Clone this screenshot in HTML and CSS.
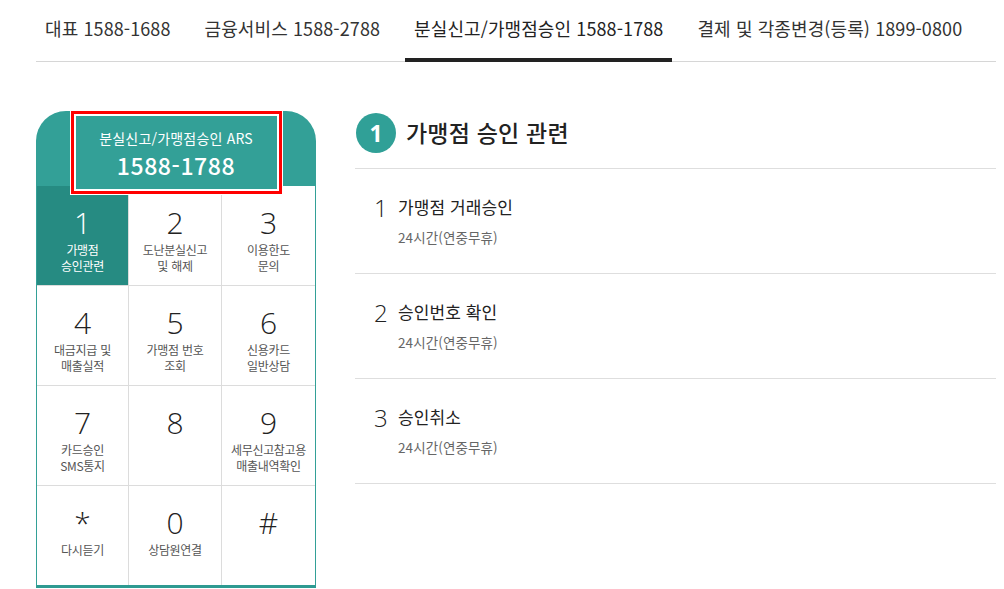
FILE: index.html
```html
<!DOCTYPE html>
<html lang="ko">
<head>
<meta charset="utf-8">
<title>ARS</title>
<link rel="stylesheet" href="styles.css">
</head>
<body>
<div class="wrap">
  <ul class="tabs">
    <li class="tab">대표 1588-1688</li>
    <li class="tab">금융서비스 1588-2788</li>
    <li class="tab active">분실신고/가맹점승인 1588-1788</li>
    <li class="tab">결제 및 각종변경(등록) 1899-0800</li>
  </ul>

  <div class="main">
    <div class="phone">
      <div class="phone-head">
        <div class="ars-box">
          <p class="ars-label">분실신고/가맹점승인 ARS</p>
          <p class="ars-num">1588-1788</p>
        </div>
      </div>
      <div class="keypad">
        <div class="key active"><span class="k-num">1</span><span class="k-txt">가맹점<br>승인관련</span></div>
        <div class="key"><span class="k-num">2</span><span class="k-txt">도난분실신고<br>및 해제</span></div>
        <div class="key"><span class="k-num">3</span><span class="k-txt">이용한도<br>문의</span></div>
        <div class="key"><span class="k-num">4</span><span class="k-txt">대금지급 및<br>매출실적</span></div>
        <div class="key"><span class="k-num">5</span><span class="k-txt">가맹점 번호<br>조회</span></div>
        <div class="key"><span class="k-num">6</span><span class="k-txt">신용카드<br>일반상담</span></div>
        <div class="key"><span class="k-num">7</span><span class="k-txt">카드승인<br>SMS통지</span></div>
        <div class="key"><span class="k-num">8</span><span class="k-txt"></span></div>
        <div class="key"><span class="k-num">9</span><span class="k-txt">세무신고참고용<br>매출내역확인</span></div>
        <div class="key last"><span class="k-num star">*</span><span class="k-txt">다시듣기</span></div>
        <div class="key last"><span class="k-num">0</span><span class="k-txt">상담원연결</span></div>
        <div class="key last"><span class="k-num">#</span><span class="k-txt"></span></div>
      </div>
    </div>

    <div class="detail">
      <div class="detail-head">
        <span class="circle">1</span>
        <h2 class="detail-title">가맹점 승인 관련</h2>
      </div>
      <ul class="items">
        <li class="item">
          <span class="i-num">1</span>
          <div class="i-body">
            <p class="i-title">가맹점 거래승인</p>
            <p class="i-sub">24시간(연중무휴)</p>
          </div>
        </li>
        <li class="item">
          <span class="i-num">2</span>
          <div class="i-body">
            <p class="i-title">승인번호 확인</p>
            <p class="i-sub">24시간(연중무휴)</p>
          </div>
        </li>
        <li class="item">
          <span class="i-num">3</span>
          <div class="i-body">
            <p class="i-title">승인취소</p>
            <p class="i-sub">24시간(연중무휴)</p>
          </div>
        </li>
      </ul>
    </div>
  </div>
</div>
</body>
</html>
```

FILE: styles.css
```css
* { box-sizing: border-box; }
html, body { margin: 0; padding: 0; background: #fff; }
body {
  font-family: "Noto Sans CJK KR", "Noto Sans", sans-serif;
  color: #222;
}
p, h2, ul { margin: 0; padding: 0; }
ul { list-style: none; }

.wrap {
  width: 960px;
  margin-left: 36px;
}

/* tabs */
.tabs {
  display: flex;
  gap: 16px;
  height: 62px;
  border-bottom: 1px solid #d6d6d6;
}
.tab {
  padding: 0 9px 3px;
  height: 62px;
  line-height: 56px;
  font-size: 18px;
  color: #333;
  letter-spacing: 0.1px;
  border-bottom: 4px solid transparent;
  white-space: nowrap;
}
.tab.active {
  color: #222;
  border-bottom-color: #222;
}

/* main */
.main {
  display: flex;
  gap: 39px;
  margin-top: 49px;
}

.phone {
  width: 280px;
  flex: none;
}
.phone-head {
  height: 75px;
  background: #33a097;
  border-radius: 30px 30px 0 0;
  display: flex;
  justify-content: center;
  align-items: flex-start;
}
.ars-box {
  position: relative;
  z-index: 2;
  width: 211px;
  height: 83px;
  margin-bottom: -8px;
  border: 3px solid #ff0000;
  box-shadow: 0 0 0 1px #fff, inset 0 0 0 2px #fff;
  background: #33a097;
  color: #fff;
  text-align: center;
  padding-top: 14px;
}
.ars-label {
  font-size: 14px;
  line-height: 20px;
  letter-spacing: 0.2px;
}
.ars-num {
  font-size: 23px;
  font-weight: 500;
  line-height: 30px;
  margin-top: 2px;
  letter-spacing: 0.6px;
}

.keypad {
  display: grid;
  grid-template-columns: 92px 93px 93px;
  border-left: 1px solid #33a097;
  border-right: 1px solid #33a097;
  border-bottom: 3px solid #2e9a91;
}
.key {
  height: 100px;
  border-right: 1px solid #dcdcdc;
  border-bottom: 1px solid #dcdcdc;
  display: flex;
  flex-direction: column;
  align-items: center;
  padding-top: 18px;
  background: #fff;
}
.key:nth-child(3n) { border-right: none; }
.key.last { height: 99px; border-bottom: none; }
.key.active {
  background: #268b82;
}
.k-num {
  font-family: "Open Sans", "Noto Sans", sans-serif;
  font-weight: 300;
  font-size: 30px;
  line-height: 38px;
  color: #222;
}
.k-txt {
  font-size: 12px;
  line-height: 16px;
  color: #555;
  text-align: center;
  letter-spacing: -0.3px;
}
.key.active .k-num,
.key.active .k-txt { color: #fff; }

/* detail */
.detail {
  flex: 1;
}
.detail-head {
  display: flex;
  align-items: center;
  gap: 10px;
  height: 58px;
  padding-bottom: 15px;
  padding-left: 1px;
  border-bottom: 1px solid #dedede;
}
.circle {
  width: 40px;
  height: 40px;
  border-radius: 50%;
  background: #30a097;
  color: #fff;
  font-family: "Noto Sans", sans-serif;
  font-weight: 700;
  font-size: 23px;
  line-height: 40px;
  text-align: center;
  margin-top: 2px;
}
.detail-title {
  font-size: 23px;
  font-weight: 500;
  color: #222;
  letter-spacing: 0.2px;
}

.item {
  display: flex;
  height: 105px;
  border-bottom: 1px solid #dedede;
  padding: 24px 0 0 19px;
}
.i-num {
  width: 24px;
  font-family: "Open Sans", "Noto Sans", sans-serif;
  font-weight: 300;
  font-size: 24px;
  line-height: 28px;
  margin-top: 1px;
  color: #222;
}
.i-title {
  font-size: 17px;
  line-height: 28px;
  color: #222;
  letter-spacing: 0.1px;
}
.i-sub {
  font-size: 13.5px;
  line-height: 18px;
  color: #666;
  margin-top: 7px;
  letter-spacing: 0.1px;
}
```
